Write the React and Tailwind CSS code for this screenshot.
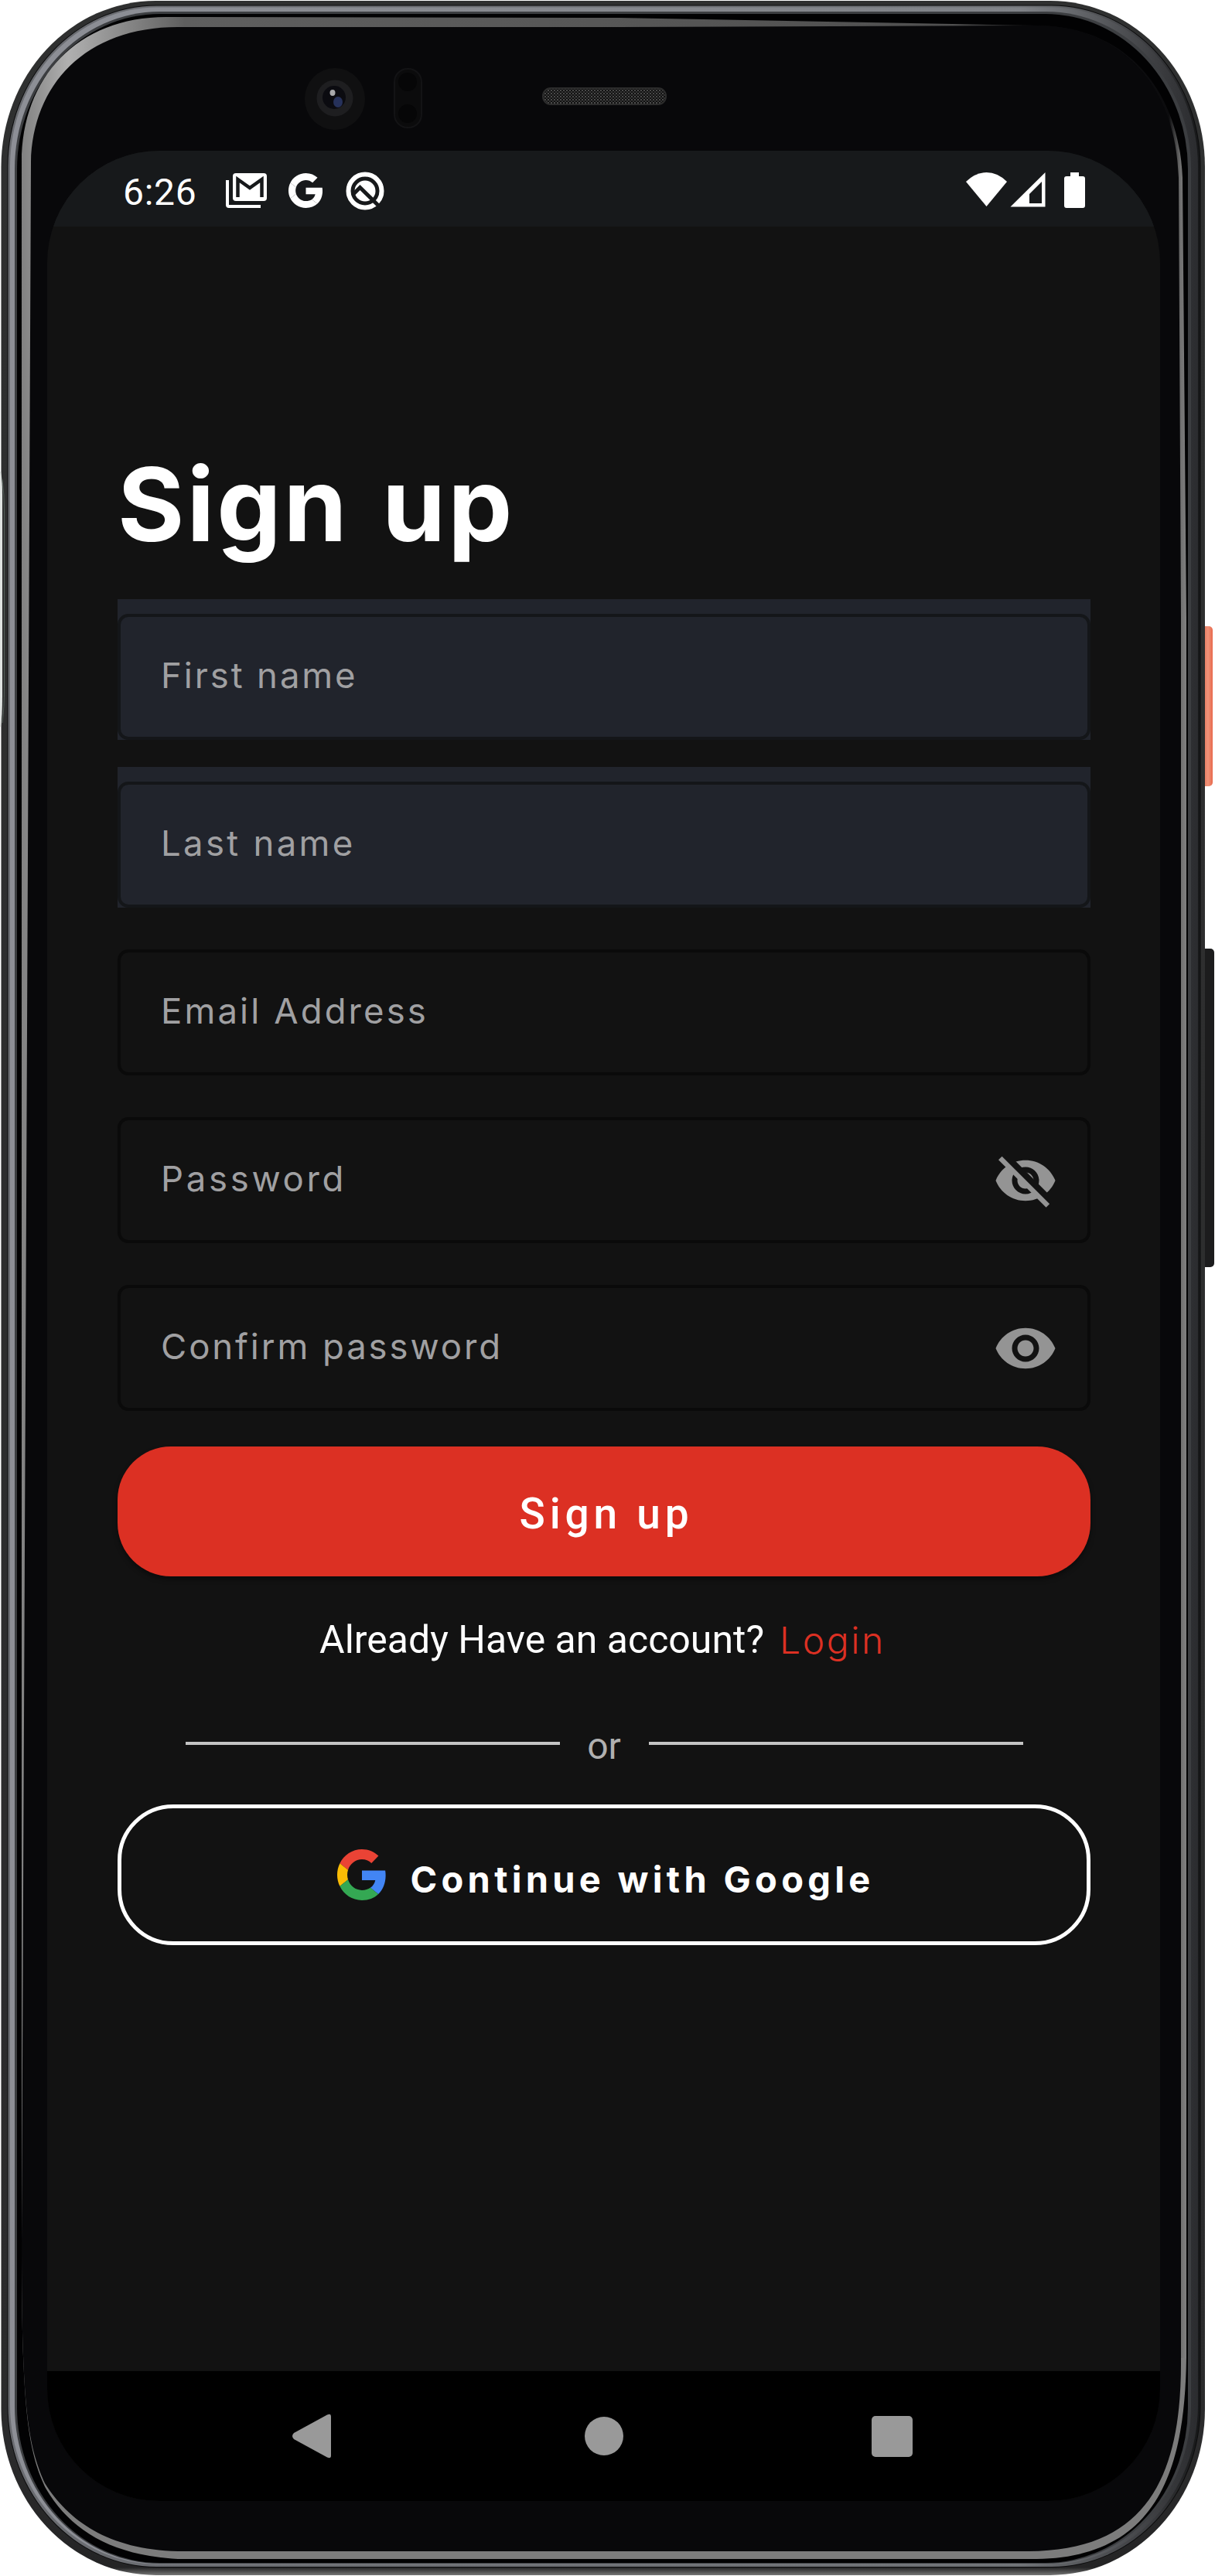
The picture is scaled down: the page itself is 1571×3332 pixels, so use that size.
import React from "react";
import { MdVisibility } from "react-icons/md";

function PhoneFrame() {
  return (
    <svg className="absolute inset-0" width="1571" height="3332" viewBox="0 0 1571 3332" fill="none" aria-hidden="true">
      <defs>
        <linearGradient id="shell" x1="0" y1="0" x2="0" y2="1">
          <stop offset="0" stopColor="#2f3030" />
          <stop offset="0.95" stopColor="#2b2b2c" />
          <stop offset="0.997" stopColor="#242425" />
          <stop offset="1" stopColor="#777" />
        </linearGradient>
        <linearGradient id="metal" x1="0" y1="0" x2="1" y2="0">
          <stop offset="0" stopColor="#6a6c71" />
          <stop offset="0.85" stopColor="#6f7276" />
          <stop offset="0.96" stopColor="#3a3b3e" />
          <stop offset="1" stopColor="#161718" />
        </linearGradient>
        <linearGradient id="metalCore" x1="0" y1="0" x2="1" y2="0">
          <stop offset="0" stopColor="#8d8f96" />
          <stop offset="0.85" stopColor="#808388" />
          <stop offset="0.97" stopColor="#3a3b3e" />
          <stop offset="1" stopColor="#2b2c2f" />
        </linearGradient>
        <linearGradient id="glass" gradientUnits="userSpaceOnUse" x1="28" y1="0" x2="1534" y2="0">
          <stop offset="0" stopColor="#818181" />
          <stop offset="0.04" stopColor="#b0b0b0" />
          <stop offset="0.14" stopColor="#5f5f5f" />
          <stop offset="0.8" stopColor="#505050" />
          <stop offset="0.88" stopColor="#0c0c0e" />
          <stop offset="0.985" stopColor="#0c0c0e" />
          <stop offset="0.995" stopColor="#707070" />
          <stop offset="1" stopColor="#808080" />
        </linearGradient>
        <linearGradient id="orange" x1="0" y1="0" x2="1" y2="0">
          <stop offset="0" stopColor="#e0694c" />
          <stop offset="0.6" stopColor="#f0937a" />
          <stop offset="1" stopColor="#e8694c" />
        </linearGradient>
        <pattern id="mesh" width="4" height="4" patternUnits="userSpaceOnUse">
          <rect width="4" height="4" fill="#111" />
          <rect width="2" height="2" fill="#4a4a4a" />
          <rect x="2" y="2" width="2" height="2" fill="#333" />
        </pattern>
        <clipPath id="rim">
          <path d="M28 210C28 100 100 22 215 22L800 23L1340 33C1450 33 1524 110 1529 230L1534 800V3050C1532 3190 1500 3308 1340 3310H230C140 3305 90 3270 60 3220C35 3170 28 3110 28 2900Z" />
        </clipPath>
      </defs>
      <rect x="1553" y="810" width="15" height="207" rx="5" fill="url(#orange)" />
      <rect x="1552" y="1227" width="18" height="412" rx="5" fill="#1c1c1d" />
      <rect x="1.5" y="1" width="1556.5" height="3330" rx="200" ry="215" fill="url(#shell)" />
      <path d="M0 610H1Q3 620 3 640V900Q3 925 1 940H0Z" fill="#dfe3e1" />
      <path d="M3 620Q5.500 640 5.500 660V890Q5.500 915 3 935" stroke="#55605b" strokeWidth="1" />
      <rect x="9.5" y="6.5" width="1543" height="3314.5" rx="193" ry="209" fill="#0c0c0d" />
      <rect x="10.5" y="7.5" width="1541" height="3312.5" rx="192" ry="208" fill="url(#metal)" />
      <rect x="13" y="9.5" width="1536" height="3307" rx="190" ry="206" fill="url(#metalCore)" />
      <rect x="19" y="15" width="1521" height="3301" rx="187" ry="203" fill="#3c3e41" />
      <rect x="22" y="18" width="1514" height="3297" rx="185" ry="201" fill="#020203" />
      <g clipPath="url(#rim)">
        <rect width="1571" height="3050" fill="url(#glass)" />
        <rect y="3050" width="1571" height="282" fill="#7c7c7c" />
      </g>
      <path d="M40 210C42 110 110 35 230 35H800L1340 33C1448 33 1521 110 1524 230L1527 800V3050C1528 3187 1494 3300 1330 3300H230C140 3298 88 3260 58 3212C35 3160 28 3110 28 2900Z" fill="#08080a" />
      <ellipse cx="433" cy="128" rx="39" ry="40" fill="#101011" />
      <circle cx="433" cy="127" r="23.5" fill="#1e1e20" />
      <circle cx="432" cy="126" r="15" fill="#0b0b10" />
      <ellipse cx="437" cy="132" rx="6" ry="7" fill="#26315a" />
      <ellipse cx="430" cy="120" rx="3.5" ry="4" fill="#a9a9ab" />
      <rect x="510" y="89" width="35" height="76" rx="17" fill="#0b0b0c" stroke="#131315" strokeWidth="2" />
      <circle cx="527" cy="106" r="12" fill="#060607" />
      <circle cx="527" cy="147" r="12" fill="#060607" />
      <rect x="702" y="114" width="159" height="21" rx="10" fill="url(#mesh)" stroke="#2c2c2c" strokeWidth="2" />
    </svg>
  );
}

function GmailIcon() {
  return (
    <svg className="h-[46px] w-[54px]" viewBox="0 0 54 46" fill="none" aria-hidden="true">
      <path d="M2 9V41Q2 43 4 43H45" stroke="#fff" strokeWidth="4" />
      <rect x="9" y="0" width="44" height="36" rx="4" fill="#fff" />
      <path d="M15.500 31V8L31 19L46.500 8V31" stroke="#17191b" strokeWidth="4.500" />
    </svg>
  );
}

function GoogleGlyph({ className, colors }) {
  return (
    <svg className={className} viewBox="0 0 48 48" preserveAspectRatio="none" aria-hidden="true">
      <path fill={colors[0]} d="M24 9.5c3.540 0 6.710 1.220 9.210 3.600l6.850-6.850C35.900 2.380 30.470 0 24 0 14.620 0 6.510 5.380 2.560 13.220l7.980 6.190C12.430 13.720 17.740 9.500 24 9.500z" />
      <path fill={colors[1]} d="M46.980 24.550c0-1.570-.15-3.090-.38-4.550H24v9.020h12.940c-.58 2.960-2.260 5.480-4.780 7.180l7.730 6c4.510-4.180 7.090-10.360 7.090-17.650z" />
      <path fill={colors[2]} d="M10.530 28.590c-.48-1.450-.76-2.990-.76-4.590s.27-3.140.76-4.590l-7.980-6.190C.92 16.460 0 20.120 0 24c0 3.880.92 7.540 2.560 10.780l7.970-6.190z" />
      <path fill={colors[3]} d="M24 48c6.480 0 11.930-2.130 15.890-5.810l-7.730-6c-2.150 1.450-4.920 2.300-8.160 2.300-6.260 0-11.570-4.220-13.470-9.910l-7.980 6.190C6.510 42.620 14.620 48 24 48z" />
    </svg>
  );
}

function QIcon() {
  return (
    <svg className="h-[50px] w-[50px]" viewBox="0 0 50 50" fill="none" aria-hidden="true">
      <circle cx="25" cy="25" r="21.500" stroke="#fff" strokeWidth="6" />
      <circle cx="25" cy="25" r="13.500" fill="#fff" />
      <path d="M10 29L18.500 20.500L45 46.500" stroke="#17191b" strokeWidth="5" />
    </svg>
  );
}

function EyeOff() {
  return (
    <svg className="size-[84px]" viewBox="0 0 24 24" aria-hidden="true">
      <defs>
        <mask id="slashGap" maskUnits="userSpaceOnUse" x="0" y="0" width="24" height="24">
          <rect width="24" height="24" fill="#fff" />
          <path d="M3 1.300L23.500 21.800L20.800 24.500L0.300 4Z" fill="#000" transform="translate(0.900 -0.900)" />
          <path d="M0 1.100L24 25.100H0Z" fill="#fff" />
        </mask>
      </defs>
      <path mask="url(#slashGap)" fill="currentColor" d="M12 4.500C7 4.500 2.730 7.610 1 12c1.730 4.390 6 7.500 11 7.500s9.270-3.110 11-7.500c-1.730-4.390-6-7.500-11-7.500zM12 17c-2.760 0-5-2.240-5-5s2.240-5 5-5 5 2.240 5 5-2.240 5-5 5zm0-8c-1.660 0-3 1.340-3 3s1.340 3 3 3 3-1.340 3-3-1.340-3-3-3z" />
      <path fill="currentColor" d="M3.300 3.050L20.900 20.650L19.600 21.950L2 4.350Z" />
    </svg>
  );
}

function StatusBar() {
  return (
    <div className="flex h-[98px] shrink-0 items-start bg-[#17191b]">
      <span className="ml-[98px] mt-[26px] w-[96px] whitespace-nowrap font-[Roboto] text-[48px] leading-[56px] tracking-[0.7px] text-white">6:26</span>
      <div className="ml-[37px] mt-[28.500px] flex items-start">
        <GmailIcon />
        <GoogleGlyph className="ml-[27px] h-[45px] w-[45px]" colors={["#fff", "#fff", "#fff", "#fff"]} />
        <div className="-mt-[2px] ml-[29px]"><QIcon /></div>
      </div>
      <svg className="ml-auto mr-[96px] mt-[28px] h-[46px] w-[155px]" viewBox="0 0 155 46" fill="#fff" aria-hidden="true">
        <path d="M0 12Q12 0 26.500 0T53 12L26.500 44Z" />
        <path fillRule="evenodd" d="M102.500 0V44.500H57.500ZM98 12L82 28V40H98Z" />
        <path d="M135 0H146V5H151Q154 5 154 8V43Q154 46 151 46H130Q127 46 127 43V8Q127 5 130 5H135Z" />
      </svg>
    </div>
  );
}

function Field({ label, tracking, filled, icon }) {
  return (
    <div className={filled ? "mb-[35px] bg-[#21242c] pt-[19px]" : "mb-[35px] pt-[19px]"}>
      <div className={filled
        ? "flex h-[163px] items-center justify-between rounded-[14px] border-4 border-[#141619] pl-[52px] pr-[38px]"
        : "flex h-[163px] items-center justify-between rounded-[14px] border-4 border-[#0a0a0a] pl-[52px] pr-[38px]"}>
        <span className={tracking}>
          <span className="block whitespace-nowrap pb-[4px] text-[45.500px] leading-[56px] text-[#a0a0a2]">{label}</span>
        </span>
        <span className="text-[#949494]">{icon}</span>
      </div>
    </div>
  );
}

export default function App() {
  return (
    <div className="relative h-[3332px] w-[1571px] overflow-hidden bg-white font-[Inter,sans-serif]">
      <PhoneFrame />
      <div className="relative flex h-[3235px] w-[1500px] pl-[61px] pt-[195px]">
        <div className="flex w-[1439px] flex-col overflow-hidden rounded-[145px] bg-[#121212]">
          <StatusBar />
          <main className="flex flex-1 flex-col px-[91px] pr-[90px]">
            <h1 className="mt-[279px] h-[203px] whitespace-nowrap text-[132px] font-bold leading-[160px] tracking-[3px] [word-spacing:8px] text-white">Sign up</h1>
            <Field label="First name" tracking="tracking-[2.9px]" filled />
            <Field label="Last name" tracking="tracking-[3.3px]" filled />
            <Field label="Email Address" tracking="tracking-[3.1px]" />
            <Field label="Password" tracking="tracking-[3.7px]" icon={<EyeOff />} />
            <Field label="Confirm password" tracking="tracking-[2.9px]" icon={<MdVisibility className="size-[84px]" />} />
            <button className="mt-[11px] flex h-[167.500px] shrink-0 items-center justify-center rounded-[69px] bg-[#dc3023] pt-[6px] shadow-[0_4px_6px_rgba(0,0,0,0.4)]">
              <span className="-mr-[6px] font-[Roboto] text-[55px] font-medium tracking-[5.8px] text-white">Sign up</span>
            </button>
            <p className="mt-[51px] flex h-[64px] items-center justify-center whitespace-nowrap pr-[4px]">
              <span className="font-[Roboto] text-[50px] text-white">Already Have an account?</span>
              <span className="ml-[20px] text-[48px] font-light tracking-[2.6px] text-[#dc3023]">Login</span>
            </p>
            <div className="mt-[71.500px] flex h-[60px] items-center justify-center">
              <div className="h-1 w-[484px] bg-[#c4c4c4]" />
              <span className="w-[115px] pt-[8px] text-center font-[Roboto] text-[48px] leading-[56px] text-[#b0b0b0]">or</span>
              <div className="h-1 w-[484px] bg-[#c4c4c4]" />
            </div>
            <button className="mt-[49px] flex h-[182px] shrink-0 items-center justify-center rounded-[72px] border-[5px] border-white">
              <GoogleGlyph className="mr-[30px] h-[66px] w-[64px]" colors={["#ea4335", "#4285f4", "#fbbc05", "#34a853"]} />
              <span className="-mr-[5px] pt-[12px] text-[47px] font-bold tracking-[5.3px] text-white">Continue with Google</span>
            </button>
          </main>
          <nav className="flex h-[168px] shrink-0 items-center bg-black text-[#999]">
            <svg className="ml-[317px] h-[58px] w-[51px]" viewBox="0 0 51 58" fill="currentColor" aria-hidden="true">
              <path d="M2 25L45 1.500Q50 -1 50 4V54Q50 59 45 56.500L2 33Q-2 29 2 25Z" />
            </svg>
            <div className="ml-[327px] size-[50px] rounded-full bg-[#999]" />
            <div className="ml-[321px] size-[53px] rounded-[5px] bg-[#999]" />
          </nav>
        </div>
      </div>
    </div>
  );
}
